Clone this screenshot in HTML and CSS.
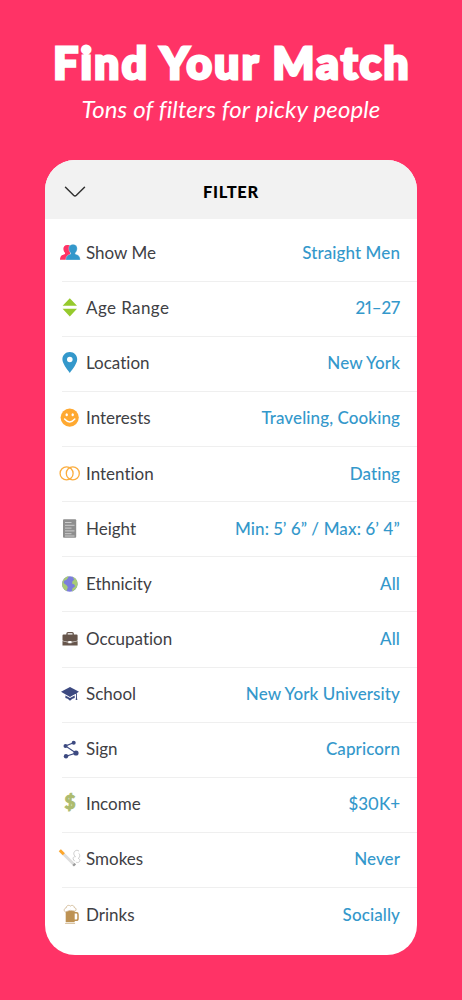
FILE: index.html
```html
<!DOCTYPE html>
<html lang="en">
<head>
  <meta charset="UTF-8">
  <title>Find Your Match</title>
  <link rel="stylesheet" href="styles.css">
</head>
<body>
  <h1>Find Your Match</h1>
  <p class="subtitle">Tons of filters for picky people</p>
  <div class="card">
    <div class="header">
      <svg class="back" width="22" height="12" viewBox="0 0 22 12"><path d="M1.5 1.3L9.6 9.3Q11 10.6 12.4 9.3L20.5 1.3" fill="none" stroke="#333" stroke-width="1.5" stroke-linecap="round"/></svg>
      <h2>FILTER</h2>
    </div>
    <ul class="list">
      <li>
        <svg class="icon" viewBox="0 0 22 22"><path d="M1 17.8C1.2 13.8 2.8 13 6 11.9L6 10.8C3.6 8.5 3.5 3 8.2 2.9C9.8 2.9 11 3.4 11.6 4.2L11 17.8Z" fill="#ff3366"/><path d="M6.7 18C6.8 14.4 8.4 13 11.6 12.1L11.6 10.9C9 8.5 8.6 2.4 14 2.2C19.4 2.4 19 8.5 16.3 10.9L16.3 12.1C19.5 13 21.2 14.4 21.3 18Z" fill="#3498cb" stroke="#fff" stroke-width=".3"/></svg>
        <span class="label">Show Me</span><span class="value">Straight Men</span>
      </li>
      <li>
        <svg class="icon" viewBox="0 0 22 22"><path d="M10.8 1.2L18 8.7H3.6ZM3.6 11.7H18L10.8 19.4Z" fill="#96ca2d"/></svg>
        <span class="label wide">Age Range</span><span class="value number">21–27</span>
      </li>
      <li>
        <svg class="icon" viewBox="0 0 22 22"><path d="M10.8 0C6.4 0 3.4 3.3 3.4 7.3C3.4 11.5 7.8 16.9 10.8 20.9C13.8 16.9 18.2 11.5 18.2 7.3C18.2 3.3 15.2 0 10.8 0Z" fill="#3498cb"/><circle cx="10.8" cy="7.5" r="2.8" fill="#fff"/></svg>
        <span class="label">Location</span><span class="value">New York</span>
      </li>
      <li>
        <svg class="icon" viewBox="0 0 22 22"><circle cx="10.7" cy="10.6" r="9.1" fill="#ffa931"/><ellipse cx="7.7" cy="7.8" rx="1.2" ry="1.5" fill="#fff"/><ellipse cx="13.7" cy="7.8" rx="1.2" ry="1.5" fill="#fff"/><path d="M5.6 12Q10.7 17.8 15.8 12" fill="none" stroke="#fff" stroke-width="1.5" stroke-linecap="round"/></svg>
        <span class="label">Interests</span><span class="value">Traveling, Cooking</span>
      </li>
      <li>
        <svg class="icon" viewBox="0 0 22 22"><g fill="none" stroke="#fbad3e" stroke-width="1.3"><circle cx="7.6" cy="10.4" r="6.5"/><circle cx="13.8" cy="10.4" r="6.5"/></g></svg>
        <span class="label">Intention</span><span class="value">Dating</span>
      </li>
      <li>
        <svg class="icon" viewBox="0 0 22 22"><rect x="4" y="1.2" width="13.2" height="18.6" rx="1" fill="#8e8e8e"/><path d="M6 4.5H12.5M6 7.3H15.5M6 10.1H12.5M6 12.9H15.5M6 15.7H12.5M6 18H15.5" stroke="#ccc" stroke-width="1"/></svg>
        <span class="label">Height</span><span class="value number min-max">Min: 5’ 6” / Max: 6’ 4”</span>
      </li>
      <li>
        <svg class="icon" viewBox="0 0 22 22"><circle cx="10.8" cy="11" r="7.8" fill="#7b7ddd"/><path d="M5.2 5.7C6.4 4.2 8.2 3.4 9.8 3.3L8.6 5.6L7.2 7L5 7.8L4.6 10L7.8 12.6L8.8 14.2L7.6 18C2.4 15.5 1.8 9.4 5.2 5.7ZM13.4 3.8C17.2 5 18.9 8.2 18.6 11.6C18.3 14.6 16 17.4 13 18.6L13.4 15.6L16.2 13.2L15.2 11.4L13 10.4L13.6 8L15.4 6.8Z" fill="#a8cc77"/></svg>
        <span class="label">Ethnicity</span><span class="value">All</span>
      </li>
      <li>
        <svg class="icon" viewBox="0 0 22 22"><path d="M8 7V5.5Q8 4.6 9 4.6H13.2Q14.2 4.6 14.2 5.5V7" fill="none" stroke="#66554b" stroke-width="1.3"/><path d="M4.5 6.4H17.6Q18.6 6.4 18.6 7.4V12.5Q15.3 13.7 12.5 13.7V12.9H9.3V13.7Q6.8 13.7 3.5 12.5V7.4Q3.5 6.4 4.5 6.4ZM3.5 13.1Q6.9 14.4 9.3 14.5V15.3H12.5V14.5Q15.4 14.4 18.6 13.1V17.6H3.5Z" fill="#66554b"/></svg>
        <span class="label">Occupation</span><span class="value">All</span>
      </li>
      <li>
        <svg class="icon" viewBox="0 0 22 22"><path d="M11 3.9L20 8.8L11 14L2 8.8Z" fill="#3c4980"/><path d="M6.4 12.5L11 15.1L15.7 12.5V15.1Q13.5 15.3 11 17.7Q8.7 15.3 6.4 15.1Z" fill="#3c4980"/><path d="M11 10.9L17.5 10.5V16.5" fill="none" stroke="#3c4980" stroke-width=".9"/><path d="M17.5 13L18.4 17.1H16.6Z" fill="#3c4980"/></svg>
        <span class="label">School</span><span class="value">New York University</span>
      </li>
      <li>
        <svg class="icon" viewBox="0 0 22 22"><path d="M14.7 4.7L6.5 8L17 15L7 18.3" fill="none" stroke="#3c4980" stroke-width="1.2"/><g fill="#3c4980"><circle cx="14.7" cy="4.7" r="2"/><circle cx="6.5" cy="8" r="2"/><circle cx="17" cy="15" r="2.6"/><circle cx="7" cy="18.3" r="2.2"/></g></svg>
        <span class="label">Sign</span><span class="value">Capricorn</span>
      </li>
      <li>
        <svg class="icon" viewBox="0 0 22 22"><text class="dollar" x="11" y="16.4" text-anchor="middle">$</text></svg>
        <span class="label">Income</span><span class="value number">$30K+</span>
      </li>
      <li>
        <svg class="icon" viewBox="0 0 22 22"><path d="M1 2.5L15.5 17" stroke="#ddd" stroke-width="3"/><path d="M.8 2.3L4.8 6.3" stroke="#ffa72b" stroke-width="3"/><path d="M14.5 16L16 17.5" stroke="#999" stroke-width="3"/><path d="M17.2 14.3C21 15.4 22.1 11.5 19.3 10.4C21.7 8.9 20.5 5.5 19.8 5.4M15.8 13.3C12.2 9.7 15.2 8.5 16.5 8.6C12.5 5.7 16.4.3 20 3.1" fill="none" stroke="#ccc" stroke-width="1"/></svg>
        <span class="label">Smokes</span><span class="value">Never</span>
      </li>
      <li>
        <svg class="icon" viewBox="0 0 22 22"><path d="M15 8.8H17.5Q19 8.8 19 10.4V14.4Q19 16.3 17.4 16.3H15" fill="none" stroke="#bd9253" stroke-width="1.5"/><path d="M6.7 7H15.7V18.3H6.7Z" fill="#bd9253"/><path d="M6.1 19.5H16.1" stroke="#dac5a5" stroke-width="1"/><path d="M6.6 8C4.3 7.2 5 4.2 7.3 3.7C7.5 1 10.4.9 11.3 2.1C13.2.5 15.3 1.8 15.2 3.5C17.8 3.7 17.6 7.5 15.4 7L11 6.3Z" fill="#fff" stroke="#cbb18a" stroke-width=".8"/></svg>
        <span class="label">Drinks</span><span class="value">Socially</span>
      </li>
    </ul>
  </div>
</body>
</html>
```
FILE: styles.css
```css
*{
  box-sizing: border-box;
}
body{
  margin: 0;
  height: 1000px;
  background: #ff3366;
  font-family: Lato, "Liberation Sans", sans-serif;
  font-variant-ligatures: none;
  overflow: hidden;
}
h1{
  margin: 0;
  padding-top: 35px;
  height: 92px;
  font-size: 44px;
  line-height: 54px;
  font-weight: 900;
  letter-spacing: 2.4px;
  text-indent: 2px;
  text-align: center;
  color: #fff;
  -webkit-text-stroke: 3px #fff;
  white-space: nowrap;
}
.subtitle{
  margin: 0;
  height: 67.5px;
  padding-top: 2px;
  font-size: 24px;
  line-height: 30px;
  font-style: italic;
  letter-spacing: .15px;
  text-align: center;
  color: #fff;
  white-space: nowrap;
}
.card{
  width: 372px;
  height: 795.5px;
  margin-left: 45px;
  background: #fff;
  border-radius: 30px;
  overflow: hidden;
}
.header{
  display: grid;
  grid-template-columns: 60px 1fr 60px;
  align-items: center;
  height: 59.5px;
  padding-top: 5px;
  background: #f2f2f2;
}
.back{
  margin-left: 19px;
}
h2{
  margin: 0;
  font-size: 16.5px;
  line-height: 20px;
  font-weight: 900;
  letter-spacing: .7px;
  text-align: center;
  color: #000;
}
.list{
  list-style: none;
  margin: 0;
  padding: 7.5px 0 0 17px;
}
li{
  display: flex;
  align-items: center;
  height: 55.13px;
  padding: 0 17px 2px 0;
  border-bottom: 1px solid #efefef;
}
li:last-child{
  border-bottom: none;
}
.icon{
  width: 22px;
  height: 22px;
  margin: 1px 5px 0 -3px;
  flex: none;
  overflow: visible;
}
.dollar{
  font-size: 19px;
  font-weight: 900;
  fill: #adbb6e;
  stroke: #adbb6e;
  stroke-width: .9px;
}
.label{
  font-size: 17px;
  color: #404044;
}
.wide{
  letter-spacing: .4px;
}
.value{
  margin-left: auto;
  font-size: 17px;
  font-weight: 500;
  letter-spacing: .1px;
  color: #3498cb;
  white-space: nowrap;
}
.number{
  font-variant-numeric: proportional-nums;
  letter-spacing: -.1px;
}
.min-max{
  letter-spacing: .12px;
}
```
